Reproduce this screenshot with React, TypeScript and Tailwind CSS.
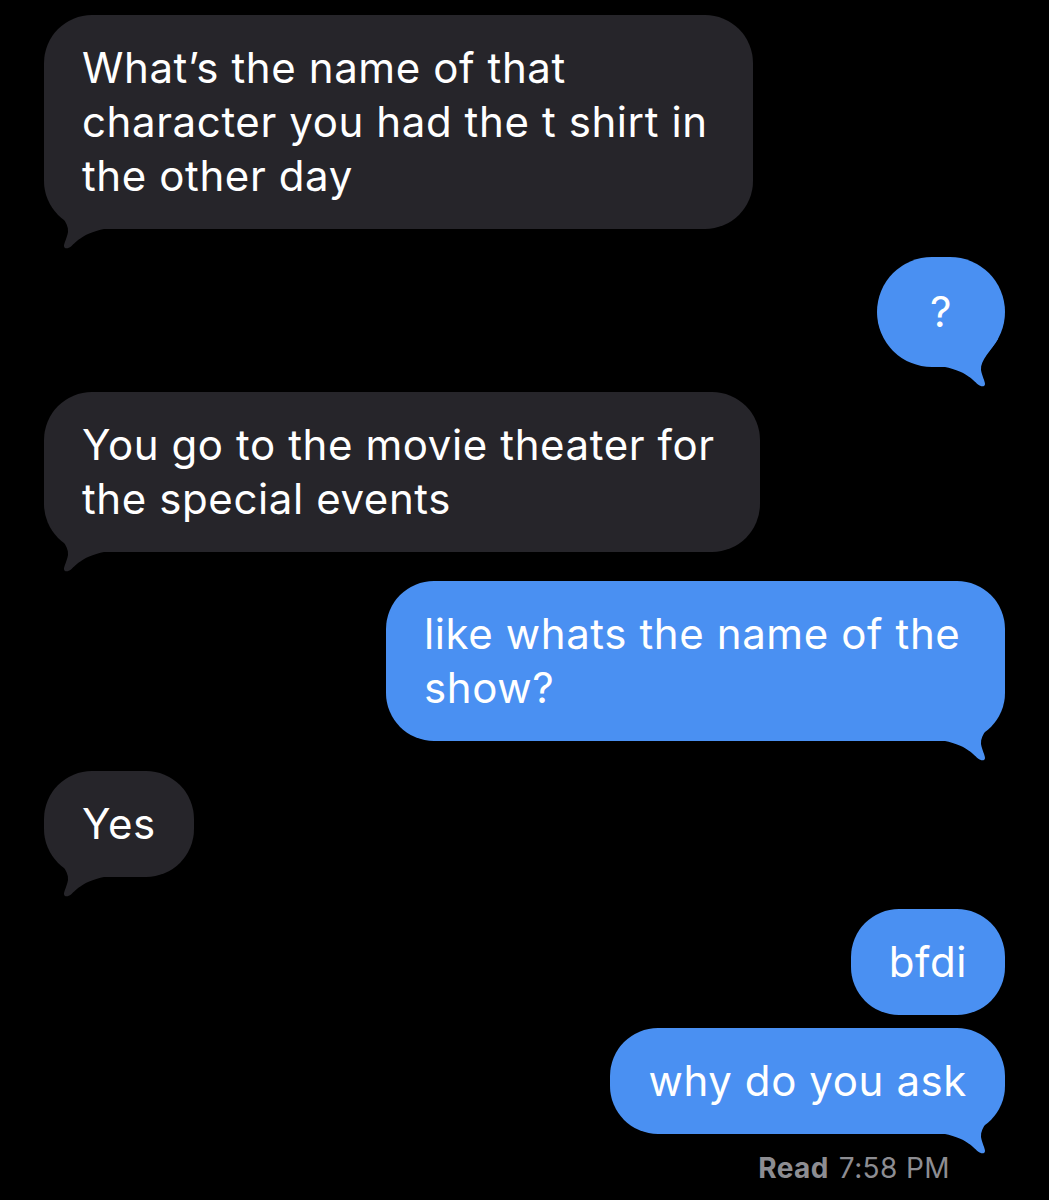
import React from "react";

const GRAY = "#26252a";
const BLUE = "#4a90f2";

function Tail({ side, color }: { side: "left" | "right"; color: string }) {
  return (
    <svg
      className={side === "left" ? "absolute left-0 bottom-[-20px]" : "absolute right-0 bottom-[-20px]"}
      width="70"
      height="50"
      viewBox="0 -30 70 50"
      style={side === "right" ? { transform: "scaleX(-1)" } : undefined}
    >
      <path
        d="M 7 -28 C 14 -16, 25 -7, 24 3 C 23 9, 20 14, 20 17 C 20 20, 24 20, 27 17.5 C 33 12, 40 4, 60 0 L 60 -28 Z"
        fill={color}
      />
    </svg>
  );
}

function Bubble({
  side,
  children,
  tail,
  className,
}: {
  side: "left" | "right";
  children: React.ReactNode;
  tail?: boolean;
  className?: string;
}) {
  const color = side === "left" ? GRAY : BLUE;
  return (
    <div className={side === "left" ? "flex justify-start" : "flex justify-end"}>
      <div
        className={
          "relative rounded-[48px] py-[26px] px-[38px] text-white text-[42px] tracking-[0.6px] leading-[54px] whitespace-nowrap " +
          (className ?? "")
        }
        style={{ backgroundColor: color }}
      >
        {tail && <Tail side={side} color={color} />}
        <span className="relative">{children}</span>
      </div>
    </div>
  );
}

export default function App() {
  return (
    <div
      className="w-[1049px] h-[1200px] bg-black overflow-hidden px-[44px] pt-[15px]"
      style={{ fontFamily: "Inter, 'Noto Sans', sans-serif" }}
    >
      <Bubble side="left" tail className="w-[709px]">
        What’s the name of that
        <br />
        character you had the t shirt in
        <br />
        the other day
      </Bubble>
      <div className="mt-[28px]">
        <Bubble side="right" tail className="w-[128px] text-center !px-0 !py-[28px] !rounded-[56px]">
          ?
        </Bubble>
      </div>
      <div className="mt-[25px]">
        <Bubble side="left" tail className="w-[716px]">
          You go to the movie theater for
          <br />
          the special events
        </Bubble>
      </div>
      <div className="mt-[29px]">
        <Bubble side="right" tail className="w-[619px]">
          like whats the name of the
          <br />
          show?
        </Bubble>
      </div>
      <div className="mt-[30px]">
        <Bubble side="left" tail>
          Yes
        </Bubble>
      </div>
      <div className="mt-[32px]">
        <Bubble side="right">bfdi</Bubble>
      </div>
      <div className="mt-[13px]">
        <Bubble side="right" tail>
          why do you ask
        </Bubble>
      </div>
      <div className="flex justify-end pr-[55px] mt-[18px] text-[28px] tracking-[0.4px] leading-[32px] text-[#8d8d92]">
        <span className="font-bold">Read</span>
        <span className="ml-[10px]">7:58 PM</span>
      </div>
    </div>
  );
}
